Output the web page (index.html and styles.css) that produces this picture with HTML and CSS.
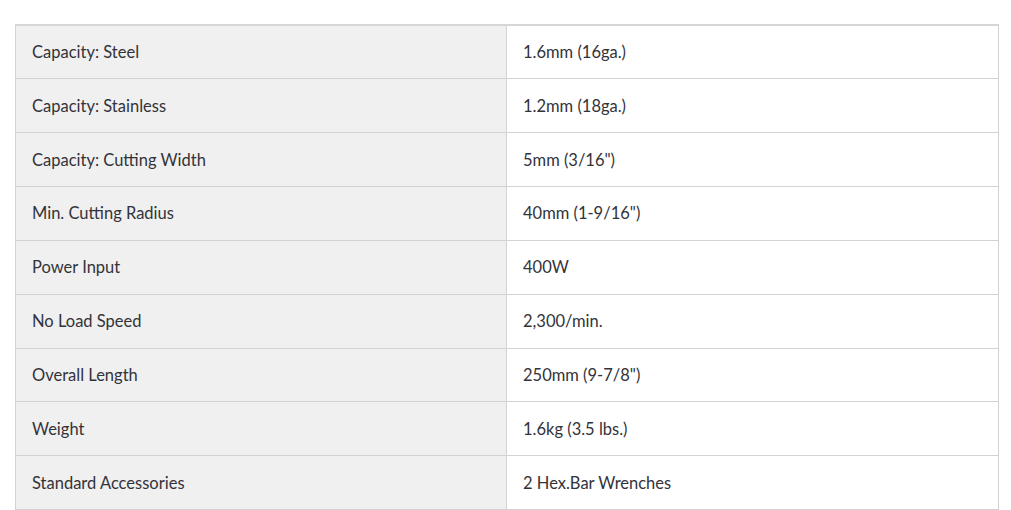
FILE: index.html
```html
<!DOCTYPE html>
<html>
<head>
<meta charset="utf-8">
<link rel="stylesheet" href="styles.css">
</head>
<body>
<div class="wrap">
<table class="specs">
<tbody>
<tr><th>Capacity: Steel</th><td>1.6mm (16ga.)</td></tr>
<tr><th>Capacity: Stainless</th><td>1.2mm (18ga.)</td></tr>
<tr><th>Capacity: Cutting Width</th><td>5mm (3/16")</td></tr>
<tr><th>Min. Cutting Radius</th><td>40mm (1-9/16")</td></tr>
<tr><th>Power Input</th><td>400W</td></tr>
<tr><th>No Load Speed</th><td>2,300/min.</td></tr>
<tr><th>Overall Length</th><td>250mm (9-7/8")</td></tr>
<tr><th>Weight</th><td>1.6kg (3.5 lbs.)</td></tr>
<tr><th>Standard Accessories</th><td>2 Hex.Bar Wrenches</td></tr>
</tbody>
</table>
</div>
</body>
</html>
```
FILE: styles.css
```css
html, body {
  margin: 0;
  padding: 0;
  background: #fff;
}
.wrap {
  padding: 24px 12px 0 15px;
}
.specs {
  width: 984px;
  border-collapse: collapse;
  table-layout: fixed;
  font-family: Lato, "Noto Sans", "Liberation Sans", sans-serif;
  font-size: 16.5px;
  color: #33333a;
  border-top: 2px solid #d6d6d6;
}
.specs th, .specs td {
  height: 53.85px;
  padding: 0 0 0 16px;
  border: 1px solid #d3d3d3;
  text-align: left;
  font-weight: normal;
  vertical-align: middle;
  box-sizing: border-box;
}
.specs tr:first-child th, .specs tr:first-child td {
  border-top: 2px solid #d6d6d6;
}
.specs th {
  background: #f0f0f0;
  width: 491px;
}
.specs td {
  background: #fff;
}
```
